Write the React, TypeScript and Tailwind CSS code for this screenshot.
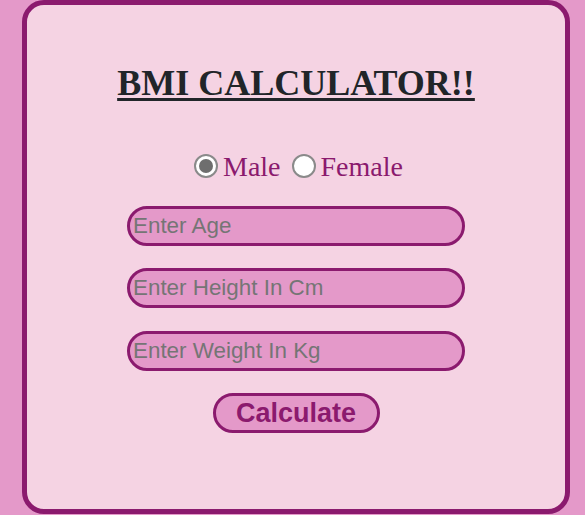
import React, { useState } from "react";

function Radio({ checked, onClick }: { checked: boolean; onClick: () => void }) {
  return (
    <span
      onClick={onClick}
      className="inline-flex h-[24px] w-[24px] items-center justify-center rounded-full border-[2px] border-[#8a8a8a] bg-white cursor-pointer"
    >
      {checked && <span className="block h-[14px] w-[14px] rounded-full bg-[#6e6e6e]" />}
    </span>
  );
}

export default function App() {
  const [gender, setGender] = useState("male");
  const inputCls =
    "box-border h-[40px] w-[338px] rounded-full border-[3px] border-[#8b1a6e] bg-[#e499c9] px-[3px] text-[22.4px] text-[#333] outline-none placeholder:text-[#757575]";
  return (
    <div className="min-h-[515px] w-full bg-[#e499c9] pl-[22px]">
      <div
        className="flex h-[514px] w-[548px] flex-col items-center rounded-[22px] border-[5px] border-[#8b1a6e] bg-[#f5d3e3]"
        style={{ fontFamily: '"Liberation Serif", "Times New Roman", serif' }}
      >
        <h1 className="mt-[58px] text-[36px] font-bold leading-[40px] text-[#212529] underline decoration-[3px] underline-offset-[3px]">
          BMI CALCULATOR!!
        </h1>
        <div className="ml-[5px] mt-[48px] flex h-[32px] items-center text-[28px] leading-[32px] text-[#8b1a6e]">
          <span className="-mt-[3px] flex">
            <Radio checked={gender === "male"} onClick={() => setGender("male")} />
          </span>
          <span className="ml-[5px]">Male</span>
          <span className="-mt-[3px] ml-[11px] flex">
            <Radio checked={gender === "female"} onClick={() => setGender("female")} />
          </span>
          <span className="ml-[5px]">Female</span>
        </div>
        <div
          className="mt-[23px] flex flex-col items-center"
          style={{ fontFamily: '"Liberation Sans", Arial, sans-serif' }}
        >
          <input placeholder="Enter Age" className={inputCls} />
          <input placeholder="Enter Height In Cm" className={"mt-[22px] " + inputCls} />
          <input placeholder="Enter Weight In Kg" className={"mt-[23px] " + inputCls} />
          <button className="mt-[22px] box-border h-[40px] w-[167px] rounded-full border-[3px] border-[#8b1a6e] bg-[#e499c9] text-[27px] font-bold leading-none text-[#8b1a6e]">
            Calculate
          </button>
        </div>
      </div>
    </div>
  );
}
